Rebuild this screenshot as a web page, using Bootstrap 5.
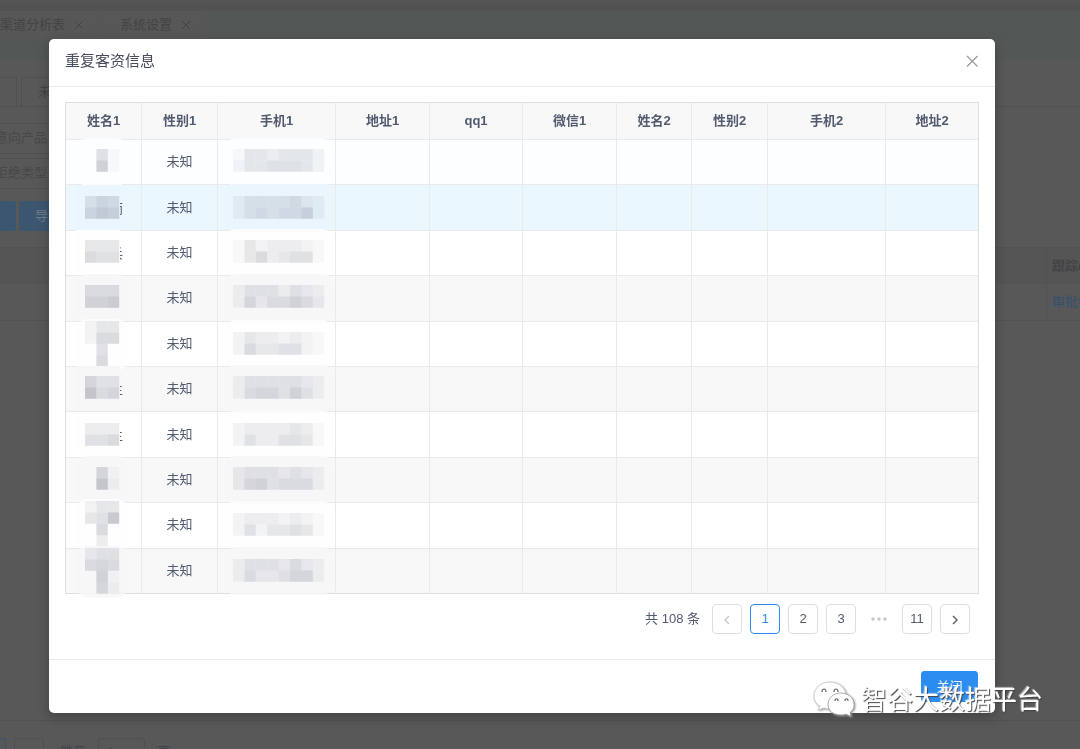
<!DOCTYPE html>
<html lang="zh-CN">
<head>
<meta charset="utf-8">
<meta name="viewport" content="width=device-width, initial-scale=1">
<title>重复客资信息</title>
<link href="https://cdn.jsdelivr.net/npm/bootstrap@5.3.0/dist/css/bootstrap.min.css" rel="stylesheet">
<style>
  body { font-family: "Liberation Sans", "Noto Sans CJK SC", sans-serif; font-size: 13px; line-height: 20px; color: #515a6e; background: #585858; }
  /* dimmed page behind the dialog */
  .backpage { height: 100vh; color: #424446; }
  .topline { height: 11px; background: #525252; border-top: 4px solid #555; }
  .tabstrip { height: 49px; background: #535857; }
  .tabstrip .tabitem { height: 28px; background: #575757; padding-right: 15px; margin-right: 2px; }
  .tabstrip .tabitem + .tabitem { padding-left: 18px; }
  .subtabs { height: 47px; border-bottom: 1px solid #505050; padding-top: 17px; }
  .subtab { height: 30px; border: 1px solid #505050; border-bottom: 0; }
  .dimbox { height: 31px; border: 1px solid #505050; border-left: 0; margin-bottom: 4px; color: #484848; white-space: nowrap; }
  .dimbox span { margin-left: -5px; }
  .dimbtn { height: 30px; background: #3d5670; color: #707d8a; border: 0; border-radius: 3px; margin-right: 3px; }
  .dimrow { height: 37px; border-bottom: 1px solid #525252; }
  .dimhead { background: #555; border-top: 1px solid #525252; }
  .dimcell { width: 34px; padding-left: 5px; border-left: 1px solid #525252; white-space: nowrap; overflow: hidden; }
  .dimcell a { color: #33506e; }
  .dimpager { height: 29px; border-top: 1px solid #515151; padding-top: 17px; }
  .dimpage { width: 30px; height: 30px; border: 1px solid #505050; border-radius: 3px; }
  .dimpage.current { width: 6px; border-color: #3d5670; border-left: 0; }
  .dimpage.entry { width: 47px; }
  /* dialog */
  .modal-dialog { max-width: none; margin: 39px 85px 36px 49px; }
  .modal-content { border: 0; border-radius: 5px; box-shadow: 0 4px 12px rgba(0,0,0,.25); color: #515a6e; }
  .modal-header { height: 48px; padding: 0 16px 3px; border-color: #e8eaec; }
  .modal-title { font-size: 15px; line-height: 20px; color: #464c5b; }
  .closer { width: 14px; height: 14px; border: 0; background: none; padding: 0; color: #999; }
  .modal-body { padding: 15px 16px 0; }
  .modal-footer { height: 54px; padding: 0 17px; border-color: #e8eaec; }
  .okbtn { width: 57px; height: 31px; padding: 0; font-size: 13px; background: #2d8cf0; border-color: #2d8cf0; color: #fff; border-radius: 3px; }
  .datagrid { table-layout: fixed; height: 492px; border: 1px solid #dcdee2; border-collapse: separate; border-spacing: 0; }
  .datagrid th, .datagrid td { padding: 0; text-align: center; vertical-align: middle; border-right: 1px solid #e8eaec; border-bottom: 1px solid #e8eaec; }
  .datagrid tr > :last-child { border-right: 0; }
  .datagrid tbody tr:last-child td { border-bottom: 0; }
  .datagrid th { height: 37px; background: #f8f8f9; color: #515a6e; }
  .datagrid tbody tr:nth-child(even) { background: #f8f8f9; }
  .datagrid tbody tr:nth-child(1) { background: #fcfeff; }
  .datagrid tbody tr:nth-child(2) { background: #ebf7ff; }
  .datagrid svg { display: block; overflow: visible; height: 44px; width: 100%; }
  .pager { margin: 10px 9px 25px 0; gap: 8px; }
  .pager .pagination { gap: 8px; }
  .pager .page-item .page-link { width: 30px; height: 30px; padding: 0; border: 1px solid #dcdee2; border-radius: 4px; color: #515a6e; font-size: 13px; line-height: 28px; text-align: center; background: #fff; margin: 0; }
  .pager .page-item.active .page-link { color: #2d8cf0; border-color: #2d8cf0; }
  .pager .dots { width: 30px; }
  /* channel mark laid over the lower right corner */
  .wmark { position: fixed; right: 37px; bottom: 29px; z-index: 1100; gap: 6px; pointer-events: none; }
  .wtext { font-size: 26px; line-height: 40px; color: #fff; text-shadow: 1px 1px 1px #444, -1px -1px 1px rgba(255,255,255,.6); }
</style>
</head>
<body class="overflow-hidden">
<div class="backpage d-flex flex-column overflow-hidden" aria-hidden="true">
  <div class="topline"></div>
  <div class="tabstrip d-flex align-items-start">
    <div class="tabitem d-flex align-items-center gap-2">渠道分析表 <svg width="12" height="12" viewBox="0 0 12 12" stroke="#444" fill="none"><path d="M2 2l8 8M10 2l-8 8"/></svg></div>
    <div class="tabitem d-flex align-items-center gap-2">系统设置 <svg width="12" height="12" viewBox="0 0 12 12" stroke="#444" fill="none"><path d="M2 2l8 8M10 2l-8 8"/></svg></div>
  </div>
  <div class="subtabs d-flex">
    <div class="subtab border-start-0 me-1 ps-3"></div>
    <div class="subtab px-3 pt-1">未跟进</div>
  </div>
  <div class="pt-3">
    <div class="dimbox w-25 pt-1"><span>意向产品</span></div>
    <div class="dimbox w-25 pt-1"><span>拒绝类型</span></div>
  </div>
  <div class="d-flex pt-2 pb-3">
    <button class="dimbtn rounded-start-0 p-0 ps-3" tabindex="-1" aria-label="查询"></button>
    <button class="dimbtn px-3" tabindex="-1">导出</button>
  </div>
  <div class="dimrow dimhead d-flex justify-content-end">
    <div class="dimcell fw-bold pt-2">跟踪/分</div>
  </div>
  <div class="dimrow d-flex justify-content-end">
    <div class="dimcell pt-2"><a class="text-decoration-none" href="#" tabindex="-1">审批中</a></div>
  </div>
  <div class="dimpager d-flex mt-auto flex-shrink-0 overflow-hidden">
    <div class="dimpage current rounded-start-0 me-2"></div>
    <div class="dimpage"></div>
    <div class="ms-3 pe-1 pt-1">跳至</div>
    <div class="dimpage entry ms-2 ps-2 pt-1">1</div>
    <div class="ms-2 ps-1 pt-1">页</div>
  </div>
</div>

<div class="modal d-block overflow-hidden" role="dialog" aria-modal="true" aria-labelledby="dlgTitle">
  <div class="modal-dialog">
    <div class="modal-content">
      <div class="modal-header">
        <h1 class="modal-title fw-normal" id="dlgTitle">重复客资信息</h1>
        <button type="button" class="closer d-flex" aria-label="关闭窗口"><svg width="14" height="14" viewBox="0 0 14 14" fill="none" stroke="currentColor" stroke-width="1.2"><path d="M2 2l10.500 10.500M12.500 2L2 12.500"/></svg></button>
      </div>
      <div class="modal-body">
        <table class="datagrid w-100">
          <colgroup><col style="width:76px"><col style="width:76px"><col style="width:118px"><col style="width:94px"><col style="width:93px"><col style="width:94px"><col style="width:75px"><col style="width:76px"><col style="width:118px"><col></colgroup>
          <thead><tr><th>姓名1</th><th>性别1</th><th>手机1</th><th>地址1</th><th>qq1</th><th>微信1</th><th>姓名2</th><th>性别2</th><th>手机2</th><th>地址2</th></tr></thead>
          <tbody id="rows"></tbody>
        </table>
        <nav class="pager d-flex justify-content-end align-items-center" aria-label="分页">
          <span class="me-1">共 108 条</span>
          <ul class="pagination mb-0">
            <li class="page-item"><a class="page-link" href="#" aria-label="上一页"><svg width="8" height="10" viewBox="0 0 8 10" fill="none" stroke="#c5c8ce" stroke-width="1.400"><path d="M6 1L2 5l4 4"/></svg></a></li>
            <li class="page-item active"><a class="page-link" href="#">1</a></li>
            <li class="page-item"><a class="page-link" href="#">2</a></li>
            <li class="page-item"><a class="page-link" href="#">3</a></li>
            <li class="dots d-flex align-items-center justify-content-center"><svg width="16" height="4" viewBox="0 0 16 4" fill="#c5c8ce"><circle cx="2" cy="2" r="1.700"/><circle cx="8" cy="2" r="1.700"/><circle cx="14" cy="2" r="1.700"/></svg></li>
            <li class="page-item"><a class="page-link" href="#">11</a></li>
            <li class="page-item"><a class="page-link" href="#" aria-label="下一页"><svg width="8" height="10" viewBox="0 0 8 10" fill="none" stroke="#666" stroke-width="1.500"><path d="M2 1l4 4-4 4"/></svg></a></li>
          </ul>
        </nav>
      </div>
      <div class="modal-footer"><button type="button" class="btn okbtn m-0">关闭</button></div>
    </div>
  </div>
</div>

<div class="wmark d-flex align-items-center">
  <svg width="43" height="40" viewBox="0 0 43 40" fill="#fff" stroke="#888" stroke-width=".7" style="filter:drop-shadow(1px 1px 1px #999)">
    <path d="M18 2C9 2 2 8 2 16c0 4 2 8 6 10l-2 4 6-2c2 .6 4 1 6 1 9 0 16-6 16-13.500S27 2 18 2z" stroke="#bbb"/>
    <path d="M29 13c-7.500 0-13 5-13 11.500S21.500 35 29 35c2 0 3.500-.3 5-.8l5 2.300-1-4c3-2 4.500-5 4-8.500C42 18 36.500 13 29 13z"/>
    <path d="M10 12c0-4 4-4 4 0M22 12c0-4 4-4 4 0M23 21c0-3 3-3 3 0M33 21c0-3 3-3 3 0" fill="none" stroke="#666" stroke-width="1.200"/>
  </svg>
  <span class="wtext">智谷大数据平台</span>
</div>

<script src="https://cdn.jsdelivr.net/npm/bootstrap@5.3.0/dist/js/bootstrap.bundle.min.js"></script>
<script>
  // Masked values: one string per line of blocks, one digit per block (0 = clear, 9 = darkest)
  const rows = [
    { y: 9,  n: ['051', '081'],               p: ['14434442', '24455542'] },
    { y: 10, n: ['465', '687'], t: '雨',      p: ['24444532', '24545572'] },
    { y: 9,  n: ['444', '655'], t: '兵',      p: ['14233321', '14634551'] },
    { y: 9,  n: ['555', '778'],               p: ['24442432', '26355753'] },
    { y: -1, n: ['244', '266', '050', '060'], y2: 10, p: ['24332321', '26445521'] },
    { y: 9,  n: ['644', '956'], t: '生',      p: ['24444432', '25664742'] },
    { y: 10, n: ['333', '556'], t: '生',      p: ['23333431', '25335541'] },
    { y: 9,  n: ['061', '092'],               p: ['34443432', '36745552'] },
    { y: -2, n: ['244', '459', '060', '030'], y2: 10, p: ['23332321', '25244541'] },
    { y: -1, n: ['344', '565', '071', '062'], y2: 10, p: ['24443532', '25334662'] }
  ];
  const tint = i => i === 0 ? '#fcfeff' : i === 1 ? '#eaf5fd' : i % 2 ? '#f7f7f8' : '#fefefe';
  const B = 11.4;
  function mask(lines, x, y, i, t) {
    const w = lines[0].length * B, h = lines.length * B;
    let s = '<svg aria-hidden="true">';
    if (t) s += `<text x="44" y="27" font-size="13" fill="#515a6e">${t}</text>`;
    s += t ? `<rect x="10" y="-1" width="44" height="42" fill="${tint(i)}"/>`
           : `<rect x="${x - 9}" y="${Math.min(y, 0) - 2}" width="${w + 18}" height="${Math.max(h, 42) + 6}" rx="12" fill="${tint(i)}" fill-opacity=".85"/>`;
    lines.forEach((l, r) => [...l].forEach((d, c) => {
      if (+d) s += `<rect x="${x + c * B}" y="${y + r * B}" width="11.400" height="11.400" fill="rgba(70,75,95,${d * 0.032})"/>`;
    }));
    return s + '</svg>';
  }
  document.getElementById('rows').innerHTML = rows.map((r, i) =>
    `<tr><td>${mask(r.n, 19, r.y, i, r.t)}</td><td>未知</td><td>${mask(r.p, 15, r.y2 || r.y, i)}</td>${'<td></td>'.repeat(7)}</tr>`).join('');
</script>
</body>
</html>
